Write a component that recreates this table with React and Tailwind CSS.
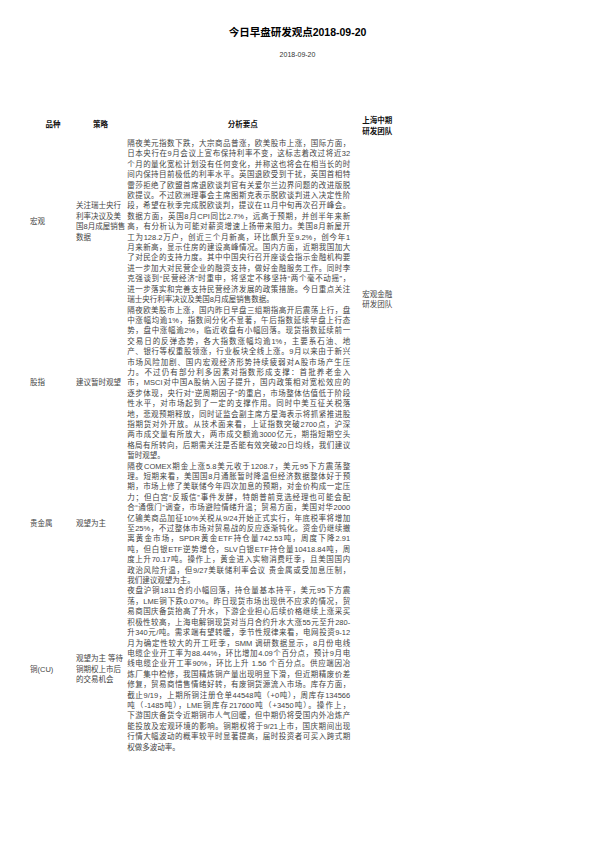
import React from 'react';

const rows = [
    {
        name: '宏观',
        strategy: ['关注瑞士央行', '利率决议及美', '国8月成屋销售', '数据'],
        lines: [
            '隔夜美元指数下跌，大宗商品普涨，欧美股市上涨，国际方面，',
            '日本央行在9月会议上宣布保持利率不变，这标志着改过将近32',
            '个月的量化宽松计划没有任何变化，并称这也将会在相当长的时',
            '间内保持目前极低的利率水平。英国退欧受到干扰，英国首相特',
            '雷莎拒绝了欧盟首席退欧谈判官有关爱尔兰边界问题的改进版脱',
            '欧提议。不过欧洲理事会主席图斯克表示脱欧谈判进入决定性阶',
            '段，希望在秋季完成脱欧谈判，提议在11月中旬再次召开峰会。',
            '数据方面，英国8月CPI同比2.7%，远高于预期，并创半年来新',
            '高，有分析认为可能对薪资增速上扬带来阻力。美国8月新屋开',
            '工为128.2万户，创近三个月新高，环比飙升至9.2%，创今年1',
            '月来新高，显示住房的建设高峰情况。国内方面，近期我国加大',
            '了对民企的支持力度。其中中国央行召开座谈会指示金融机构要',
            '进一步加大对民营企业的融资支持，做好金融服务工作。同时李',
            '克强谈到“民营经济”时重申，将坚定不移坚持“两个毫不动摇”，',
            '进一步落实和完善支持民营经济发展的政策措施。今日重点关注',
            '瑞士央行利率决议及美国8月成屋销售数据。',
        ],
    },
    {
        name: '股指',
        strategy: ['建议暂时观望'],
        lines: [
            '隔夜欧美股市上涨，国内昨日早盘三组期指高开后震荡上行，盘',
            '中涨幅均逾1%，指数间分化不显著，午后指数延续早盘上行态',
            '势，盘中涨幅逾2%，临近收盘有小幅回落。现货指数延续前一',
            '交易日的反弹态势，各大指数涨幅均逾1%，主要系石油、地',
            '产、银行等权重股领涨，行业板块全线上涨。9月以来由于新兴',
            '市场风险加剧、国内宏观经济形势持续疲弱对A股市场产生压',
            '力。不过仍有部分利多因素对指数形成支撑：首批养老金入',
            '市，MSCI对中国A股纳入因子提升，国内政策相对宽松效应的',
            '逐步体现，央行对“逆周期因子”的重启，市场整体估值低于阶段',
            '性水平，对市场起到了一定的支撑作用。同时中美互征关税落',
            '地，悲观预期释放，同时证监会副主席方星海表示将抓紧推进股',
            '指期货对外开放。从技术面来看，上证指数突破2700点，沪深',
            '两市成交量有所放大，两市成交额逾3000亿元，期指短期空头',
            '格局有所转向，后期需关注是否能有效突破20日均线，我们建议',
            '暂时观望。',
        ],
    },
    {
        name: '贵金属',
        strategy: ['观望为主'],
        lines: [
            '隔夜COMEX期金上涨5.8美元收于1208.7，美元95下方震荡整',
            '理。短期来看，美国国8月通胀暂时降温但经济数据整体好于预',
            '期，市场上修了美联储今年四次加息的预期，对金价构成一定压',
            '力；但白宫“反叛信”事件发酵，特朗普前竞选经理也可能会配',
            '合“通俄门”调查，市场避险情绪升温；贸易方面，美国对华2000',
            '亿输美商品加征10%关税从9/24开始正式实行，年底税率将增加',
            '至25%，不过整体市场对贸易战的反应逐渐钝化。资金仍继续撤',
            '离黄金市场，SPDR黄金ETF持仓量742.53吨，周度下降2.91',
            '吨，但白银ETF逆势增仓，SLV白银ETF持仓量10418.84吨，周',
            '度上升70.17吨。操作上，黄金进入实物消费旺季，且美国国内',
            '政治风险升温，但9/27美联储利率会议 贵金属或受加息压制，',
            '我们建议观望为主。',
        ],
    },
    {
        name: '铜(CU)',
        strategy: ['观望为主 等待', '铜期权上市后', '的交易机会'],
        lines: [
            '夜盘沪铜1811合约小幅回落，持仓量基本持平，美元95下方震',
            '荡，LME铜下跌0.07%。昨日现货市场出现供不应求的情况，贸',
            '易商国庆备货抬高了升水，下游企业担心后续价格继续上涨采买',
            '积极性较高，上海电解铜现货对当月合约升水大涨55元至升280-',
            '升340元/吨。需求端有望转暖，季节性规律来看，电网投资9-12',
            '月为确定性较大的开工旺季，SMM 调研数据显示，8月份电线',
            '电缆企业开工率为88.44%，环比增加4.09个百分点，预计9月电',
            '线电缆企业开工率90%，环比上升 1.56 个百分点。供应端因冶',
            '炼厂集中检修，我国精炼铜产量出现明显下滑，但近期精废价差',
            '修复，贸易商惜售情绪好转，有废铜货源流入市场。库存方面，',
            '截止9/19，上期所铜注册仓单44548吨（+0吨），周库存134566',
            '吨（-1485吨），LME铜库存217600吨（+3450吨）。操作上，',
            '下游国庆备货令近期铜市人气回暖，但中期仍将受国内外冶炼产',
            '能投放及宏观环境的影响。铜期权将于9/21上市，国庆期间出现',
            '行情大幅波动的概率较平时显著提高，届时投资者可买入跨式期',
            '权做多波动率。',
        ],
    },
];

export default function App() {
    return (
        <div className="w-[595px] min-h-[842px] bg-white text-[#444] font-['Liberation_Sans','Noto_Sans_CJK_SC',sans-serif]">
            <div className="pt-[26px] text-center">
                <h1 className="text-[10.5px] leading-[12px] font-bold text-black">今日早盘研发观点2018-09-20</h1>
                <p className="mt-[12px] text-[7px] leading-[10px] text-[#333]">2018-09-20</p>
            </div>

            <table className="ml-[30px] mt-[52px] table-fixed border-collapse text-[7.5px] leading-[10.4px]">
                <colgroup>
                    <col className="w-[46px]" />
                    <col className="w-[44px]" />
                    <col className="w-[235px]" />
                    <col className="w-[40px]" />
                </colgroup>
                <thead>
                    <tr className="h-[27px] text-[#111]">
                        <th className="p-0 text-center align-middle font-bold">品种</th>
                        <th className="p-0 text-center align-middle font-bold">策略</th>
                        <th className="p-0 text-center align-middle font-bold">分析要点</th>
                        <th className="p-0 pl-[2px] text-left align-middle font-bold leading-[11px]">
                            上海中期<br />研发团队
                        </th>
                    </tr>
                </thead>
                <tbody>
                    {rows.map((row, idx) => (
                        <tr key={row.name}>
                            <td className="p-0 align-middle whitespace-nowrap">{row.name}</td>
                            <td className="p-0 align-middle whitespace-nowrap">
                                {row.strategy.map((s) => (
                                    <div key={s}>{s}</div>
                                ))}
                            </td>
                            <td className="p-0 pl-[2px] pr-[10px] align-top">
                                {row.lines.map((line, i) => (
                                    <div
                                        key={i}
                                        className={
                                            i === row.lines.length - 1
                                                ? 'whitespace-nowrap text-left'
                                                : 'whitespace-nowrap text-justify [text-align-last:justify]'
                                        }
                                    >
                                        {line}
                                    </div>
                                ))}
                            </td>
                            {/* team cell spans the first two rows */}
                            {idx === 0 && (
                                <td rowSpan={2} className="p-0 pl-[2px] align-middle whitespace-nowrap">
                                    <div>宏观金融</div>
                                    <div>研发团队</div>
                                </td>
                            )}
                            {idx > 1 && <td className="p-0" />}
                        </tr>
                    ))}
                </tbody>
            </table>
        </div>
    );
}
